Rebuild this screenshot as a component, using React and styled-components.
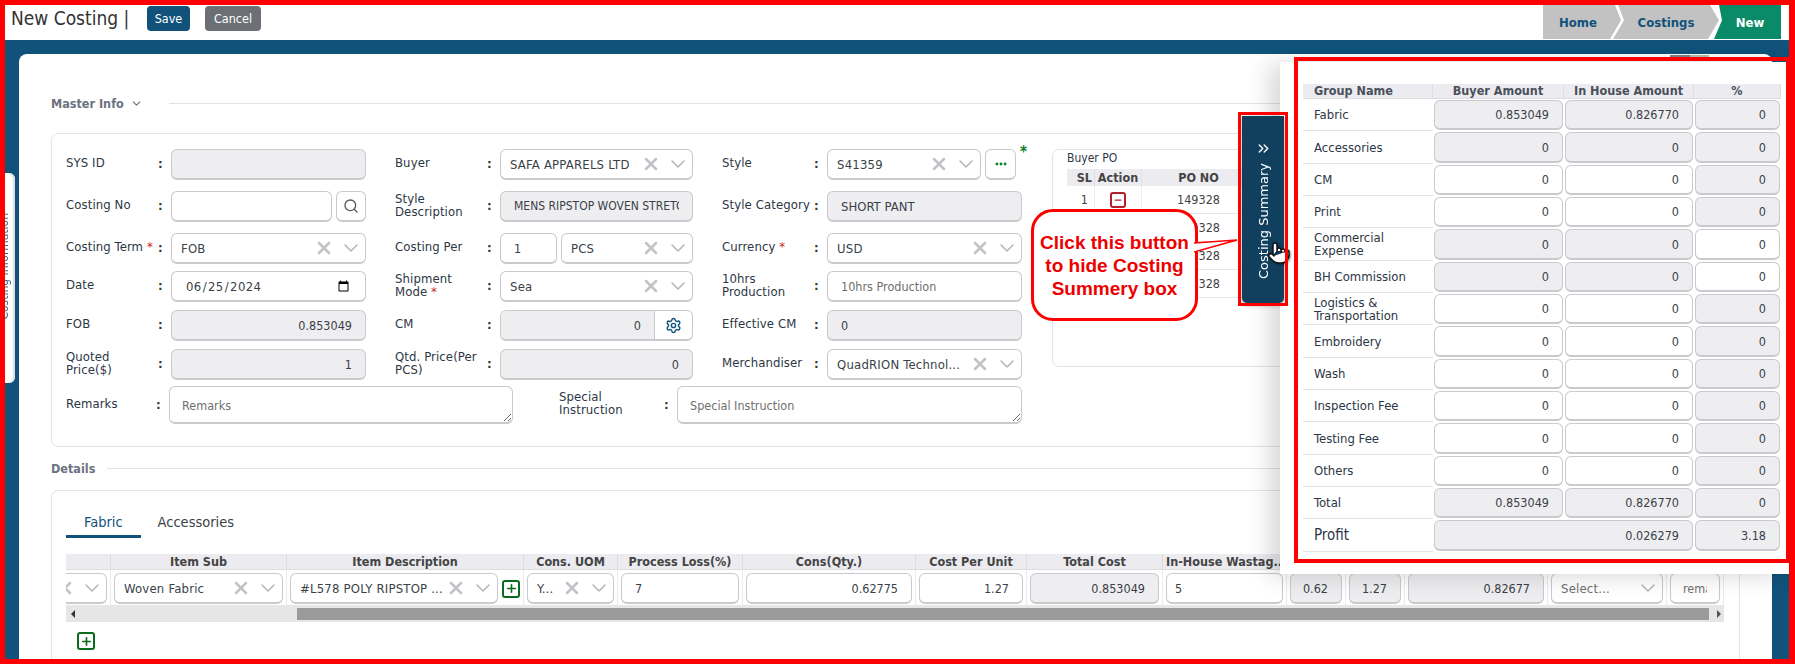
import React from "react";
import styled, { createGlobalStyle } from "styled-components";
import {
  X,
  ChevronDown,
  ChevronsRight,
  Search,
  Settings,
  Ellipsis,
  Plus,
  Minus,
  Pointer,
} from "lucide-react";

const navy = "#10527a";
const fieldBorder = "#c9c9ce";
const muted = "#eeeef0";

const GlobalStyle = createGlobalStyle`
  * { box-sizing: border-box; }
  html, body { margin: 0; padding: 0; background: ${navy}; }
  body {
    font-family: "DejaVu Sans Condensed", "DejaVu Sans", sans-serif;
    font-size: 12px;
    color: #333;
  }
`;

const Page = styled.div`
  position: relative;
  width: 1795px;
  height: 664px;
  overflow: hidden;
  background: ${navy};
`;

const TopBar = styled.header`
  display: flex;
  justify-content: space-between;
  height: 40px;
  padding: 5px 14px 1px 11px;
  background: #fff;
`;

const TitleRow = styled.div`
  display: flex;
  align-items: flex-start;
`;

const PageTitle = styled.h1`
  width: 136px;
  margin: 2px 0 0 0;
  font-size: 19px;
  font-weight: 400;
  line-height: 22px;
  color: #333;
`;

const HeadButton = styled.button`
  height: 25px;
  width: ${(p) => p.$width}px;
  margin: 1px ${(p) => p.$after}px 0 0;
  border: 0;
  border-radius: 4px;
  background: ${(p) => p.$bg};
  color: #fff;
  font: inherit;
  font-size: 12.5px;
  padding: 0;
`;

const Trail = styled.nav`
  display: flex;
`;

const Crumb = styled.a`
  display: flex;
  align-items: center;
  justify-content: center;
  width: ${(p) => p.$width}px;
  margin-left: ${(p) => (p.$first ? 0 : -8)}px;
  padding: ${(p) => (p.$first ? "0 8px 0 0" : p.$last ? "0 0 0 8px" : 0)};
  background: ${(p) => (p.$last ? "#0a8a68" : "#c2c2c2")};
  color: ${(p) => (p.$last ? "#fff" : navy)};
  font-size: 13px;
  font-weight: 700;
  clip-path: ${(p) =>
    p.$first
      ? "polygon(0 0, calc(100% - 6px) 0, 100% 45%, calc(100% - 11px) 100%, 0 100%)"
      : p.$last
        ? "polygon(8px 0, 100% 0, 100% 100%, 3px 100%, 11px 45%)"
        : "polygon(5px 0, calc(100% - 9px) 0, 100% 45%, calc(100% - 11px) 100%, 0 100%, 11px 45%)"};
`;

const Card = styled.main`
  height: 624px;
  margin: 14px 23px 0 19px;
  padding: 40px 32px 0;
  background: #fff;
  border-radius: 8px 8px 0 0;
`;

const SectionHead = styled.div`
  display: flex;
  align-items: center;
  gap: 6px;
  height: 18px;
  color: #6b7280;
  font-size: 12.5px;
  font-weight: 700;
  &::after {
    content: "";
    flex: 1;
    height: 1px;
    margin-left: ${(p) => p.$lineGap}px;
    background: #e2e2e6;
  }
`;

const Box = styled.section`
  border: 1px solid #e4e4e8;
  border-radius: 7px;
`;

const MasterBox = styled(Box)`
  display: flex;
  height: 314px;
  margin: 21px 0 12px;
  padding: 15px 0 0 14px;
`;

const FormGrid = styled.div`
  display: grid;
  grid-template-columns: 300px 298px 300px;
  grid-template-rows: 42px 42px 38px 39px 39px 38px 38px;
  column-gap: 29px;
  width: 956px;
  flex: none;
`;

const Field = styled.div`
  display: grid;
  grid-template-columns: ${(p) => p.$label || 92}px 13px 1fr;
  height: ${(p) => p.$height || 31}px;
  align-items: center;
`;

const Label = styled.label`
  font-size: 13px;
  letter-spacing: 0.1px;
  line-height: 13px;
  padding-bottom: 4px;
  color: #2d3644;
`;

const Req = styled.span`
  color: #c62828;
`;

const Colon = styled.span`
  font-weight: 700;
  font-size: 13px;
  color: #333;
  text-align: left;
  padding-bottom: 2px;
`;

const Controls = styled.div`
  display: flex;
  gap: 4px;
  min-width: 0;
  height: 100%;
`;

const Input = styled.input`
  flex: ${(p) => p.$flex || 1};
  width: 100%;
  min-width: 0;
  height: 100%;
  padding: 0 ${(p) => (p.$right ? 13 : p.$pad || 8)}px 0 ${(p) => p.$pad || 8}px;
  border: 1px solid ${fieldBorder};
  border-bottom-width: 2px;
  border-radius: 6px;
  outline: 0;
  background: ${(p) => (p.$grey ? muted : "#fff")};
  color: #3a3f48;
  font: inherit;
  font-size: ${(p) => p.$size || 12.5}px;
  letter-spacing: ${(p) => p.$track || 0}px;
  text-align: ${(p) => (p.$right ? "right" : "left")};
  &::placeholder {
    color: #6f6f6f;
  }
`;

const Area = styled.textarea`
  width: 100%;
  height: 38px;
  padding: 11px 12px 0;
  border: 1px solid ${fieldBorder};
  border-bottom-width: 2px;
  border-radius: 6px;
  outline: 0;
  font: inherit;
  font-size: 12.5px;
  &::placeholder {
    color: #6f6f6f;
  }
`;

const SelectBox = styled.div`
  display: flex;
  align-items: center;
  flex: ${(p) => p.$flex || 1};
  min-width: 0;
  height: 100%;
  padding: 0 2px 0 9px;
  border: 1px solid ${fieldBorder};
  border-bottom-width: 2px;
  border-radius: 6px;
  background: #fff;
  color: #3a3f48;
  font-size: 13px;
  letter-spacing: 0.2px;
`;

const SelectValue = styled.span`
  flex: 1;
  min-width: 0;
  overflow: hidden;
  white-space: nowrap;
  color: ${(p) => (p.$faint ? "#6f6f6f" : "inherit")};
`;

const Clear = styled(X)`
  flex: none;
  margin-right: 5px;
  color: #c2c2c7;
`;

const Caret = styled(ChevronDown)`
  flex: none;
  color: #b4b4b9;
`;

const SquareButton = styled.button`
  display: flex;
  align-items: center;
  justify-content: center;
  flex: none;
  width: ${(p) => p.$width}px;
  height: 100%;
  padding: 0;
  border: 1px solid ${fieldBorder};
  border-bottom-width: 2px;
  border-radius: 6px;
  background: #fff;
  color: ${(p) => p.$color || "#555"};
`;

const Joined = styled.div`
  display: flex;
  flex: 1;
  height: 100%;
  border: 1px solid ${fieldBorder};
  border-bottom-width: 2px;
  border-radius: 6px;
  overflow: hidden;
`;

const JoinedInput = styled(Input)`
  border: 0;
  border-radius: 0;
`;

const JoinedIcon = styled.span`
  display: flex;
  align-items: center;
  justify-content: center;
  flex: none;
  width: 38px;
  border-left: 1px solid ${fieldBorder};
  color: ${navy};
`;

const GreenStar = styled.span`
  width: 2px;
  margin-top: -4px;
  color: #0a7a2a;
  font-size: 15px;
  font-weight: 700;
  line-height: 14px;
`;

const NotesRow = styled.div`
  grid-column: 1 / -1;
  display: grid;
  grid-template-columns: 447px 463px;
  column-gap: 46px;
  margin-top: -1px;
`;

const BuyerPo = styled(Box)`
  flex: 1;
  height: 218px;
  margin: 0 19px 0 30px;
  padding: 0 0 0 14px;
`;

const PoTitle = styled.div`
  height: 19px;
  line-height: 16px;
  color: #2d3644;
`;

const PoTable = styled.div`
  display: grid;
  grid-template-columns: 28px 47px 114px;
  grid-template-rows: 17px repeat(4, 28px);
`;

const PoHead = styled.div`
  background: #ebebf0;
  border-right: 1px solid #e0e0e5;
  font-size: 12.5px;
  font-weight: 700;
  line-height: 17px;
  text-align: ${(p) => (p.$right ? "right" : "center")};
  padding-right: ${(p) => (p.$right ? 2 : 0)}px;
  color: #444;
`;

const PoCell = styled.div`
  display: flex;
  align-items: center;
  justify-content: ${(p) => (p.$right ? "flex-end" : "center")};
  padding-right: ${(p) => (p.$right ? 6 : 0)}px;
  border-bottom: 1px solid #e6e6ea;
  border-right: 1px solid #eeeef0;
  font-size: 12.5px;
  color: #444;
`;

const OutlineButton = styled.button`
  display: flex;
  align-items: center;
  justify-content: center;
  flex: none;
  width: ${(p) => p.$size || 18}px;
  height: ${(p) => p.$size || 18}px;
  padding: 0;
  border: 2px solid ${(p) => p.$color};
  border-radius: 3px;
  background: #fff;
  color: ${(p) => p.$color};
`;

const DetailsBox = styled(Box)`
  height: 200px;
  margin-top: 13px;
  padding: 17px 15px 0 14px;
  border-bottom: 0;
`;

const Tabs = styled.div`
  display: flex;
  height: 30px;
  margin-bottom: 16px;
`;

const Tab = styled.a`
  display: flex;
  align-items: center;
  padding: 0 ${(p) => (p.$active ? 18 : 17)}px;
  height: 30px;
  font-size: 14.5px;
  color: ${(p) => (p.$active ? navy : "#3a3f48")};
  border-bottom: 3px solid ${(p) => (p.$active ? navy : "transparent")};
`;

const DetailGrid = styled.div`
  display: grid;
  grid-template-columns: 45px 176px 237px 94px 125px 173px 111px 136px 124px 59px 59px 143px 119px 57px;
  grid-template-rows: 16px 35px;
  width: 1658px;
  overflow: hidden;
`;

const DetailHead = styled.div`
  overflow: hidden;
  padding: 0 3px;
  background: #ebebf0;
  border-right: 1px solid #dcdce1;
  border-bottom: 1px solid #dcdce1;
  font-weight: 700;
  font-size: 12.5px;
  line-height: 15px;
  text-align: center;
  white-space: nowrap;
  color: #444;
`;

const DetailCell = styled.div`
  display: flex;
  justify-content: ${(p) => (p.$end ? "flex-end" : "flex-start")};
  align-items: center;
  gap: 4px;
  min-width: 0;
  overflow: hidden;
  padding: 3px 3px 1px 3px;
  border-right: 1px solid #ececf0;
`;

const CutSelect = styled(SelectBox)`
  flex: none;
  width: 150px;
`;

const ScrollTrack = styled.div`
  display: flex;
  align-items: center;
  width: 1658px;
  height: 17px;
  background: #e6e6e6;
  padding: 0 2px 0 5px;
`;

const ScrollThumb = styled.div`
  height: 12px;
  margin-left: 222px;
  width: 1412px;
  background: #9b9b9b;
`;

const ArrowLeft = styled.span`
  width: 0;
  height: 0;
  border: 4px solid transparent;
  border-left: 0;
  border-right: 4px solid #333;
`;

const ArrowRight = styled.span`
  width: 0;
  height: 0;
  margin-left: 8px;
  border: 4px solid transparent;
  border-right: 0;
  border-left: 4px solid #555;
`;

const AddRow = styled.div`
  margin: 10px 0 0 11px;
`;

/* things that lie over the page */

const SideTab = styled.aside`
  position: absolute;
  left: 5px;
  top: 173px;
  width: 10px;
  height: 210px;
  overflow: hidden;
  background: #fff;
  border-radius: 0 6px 6px 0;
  box-shadow: inset -2px 0 2px #ddd;
`;

const SideTabText = styled.span`
  position: absolute;
  right: 4px;
  top: 40px;
  writing-mode: vertical-rl;
  transform: rotate(180deg);
  white-space: nowrap;
  color: #3f6a8a;
`;

const HiddenTabs = styled.div`
  position: absolute;
  left: 1670px;
  top: 55px;
  display: flex;
  height: 2px;
`;

const HiddenTab = styled.span`
  width: ${(p) => p.$width}px;
  background: ${(p) => p.$bg};
`;

const SummaryPanel = styled.aside`
  position: absolute;
  left: 1280px;
  top: 62px;
  width: 509px;
  height: 512px;
  padding: 22px 8px 0 23px;
  background: #fff;
  box-shadow: -10px 2px 22px rgba(0, 0, 0, 0.16);
`;

const SummaryToggle = styled.button`
  position: absolute;
  left: -38px;
  top: 54px;
  display: flex;
  flex-direction: column;
  align-items: center;
  gap: 6px;
  width: 42px;
  height: 187px;
  padding: 24px 0 0;
  border: 0;
  border-radius: 0 0 5px 5px;
  background: #11405f;
  color: #fff;
  box-shadow: 0 2px 5px rgba(0, 0, 0, 0.35);
`;

const ToggleText = styled.span`
  writing-mode: vertical-rl;
  transform: rotate(180deg);
  font-family: "DejaVu Sans", sans-serif;
  font-size: 13px;
  white-space: nowrap;
`;

const HandCursor = styled(Pointer)`
  position: absolute;
  left: 1267px;
  top: 241px;
  color: #111;
  fill: #fff;
  filter: drop-shadow(1px 1px 1px rgba(0, 0, 0, 0.4));
`;

const SummaryGrid = styled.div`
  display: grid;
  grid-template-columns: 130px 131px 130px 87px;
  grid-template-rows: 15px repeat(14, 32.35px);
`;

const SummaryHead = styled.div`
  background: #ebebf0;
  border-right: 1px solid #dcdce1;
  border-bottom: 1px solid #dcdce1;
  font-size: 12.5px;
  font-weight: 700;
  line-height: 14px;
  text-align: ${(p) => (p.$left ? "left" : "center")};
  padding-left: ${(p) => (p.$left ? 11 : 0)}px;
  color: #4a505a;
`;

const SummaryName = styled.div`
  display: flex;
  align-items: center;
  padding-left: 11px;
  border-bottom: 1px solid #e2e2e6;
  font-size: ${(p) => p.$size || 13}px;
  line-height: 13px;
  color: #2d3644;
`;

const SummaryCell = styled.div`
  grid-column: span ${(p) => p.$span || 1};
  padding: 1px;
`;

const Callout = styled.div`
  position: absolute;
  left: 1031px;
  top: 209px;
  display: flex;
  align-items: center;
  justify-content: center;
  width: 167px;
  height: 112px;
  border: 3px solid #f00;
  border-radius: 22px;
  background: #fff;
  color: #e00;
  font-family: "Liberation Sans", Arial, sans-serif;
  font-size: 19px;
  font-weight: 700;
  line-height: 23px;
  text-align: center;
`;

const CalloutTail = styled.svg`
  position: absolute;
  left: 160px;
  top: 26px;
`;

const RedBox = styled.div`
  position: absolute;
  left: ${(p) => p.$x}px;
  top: ${(p) => p.$y}px;
  width: ${(p) => p.$w}px;
  height: ${(p) => p.$h}px;
  border: ${(p) => p.$line}px solid #f00;
  pointer-events: none;
`;

const PageFrame = styled.div`
  position: absolute;
  inset: 0;
  border: 5px solid #f00;
  border-right-width: 6px;
  pointer-events: none;
`;

const Select = ({ value, faint, clear = true, flex }) => (
  <SelectBox $flex={flex}>
    <SelectValue $faint={faint}>{value}</SelectValue>
    {clear && <Clear size={20} strokeWidth={3} />}
    <Caret size={24} strokeWidth={1.5} />
  </SelectBox>
);

const FormField = ({ label, labelWidth, height, children }) => (
  <Field $label={labelWidth} $height={height}>
    <Label>{label}</Label>
    <Colon>:</Colon>
    <Controls>{children}</Controls>
  </Field>
);

const poRows = [1, 2, 3, 4];

// white = the amount can be typed, grey = it is worked out
const summaryRows = [
  ["Fabric", "0.853049", "0.826770", "0", "ggg"],
  ["Accessories", "0", "0", "0", "ggg"],
  ["CM", "0", "0", "0", "wwg"],
  ["Print", "0", "0", "0", "wwg"],
  [<>Commercial<br />Expense</>, "0", "0", "0", "ggw"],
  ["BH Commission", "0", "0", "0", "ggw"],
  [<>Logistics &<br />Transportation</>, "0", "0", "0", "wwg"],
  ["Embroidery", "0", "0", "0", "wwg"],
  ["Wash", "0", "0", "0", "wwg"],
  ["Inspection Fee", "0", "0", "0", "wwg"],
  ["Testing Fee", "0", "0", "0", "wwg"],
  ["Others", "0", "0", "0", "wwg"],
  ["Total", "0.853049", "0.826770", "0", "ggg"],
];

const detailHeads = [
  "",
  "Item Sub",
  "Item Description",
  "Cons. UOM",
  "Process Loss(%)",
  "Cons(Qty.)",
  "Cost Per Unit",
  "Total Cost",
  "In-House Wastag...",
  "",
  "",
  "",
  "",
  "",
];

const App = () => {
  return (
    <Page>
      <GlobalStyle />
      <TopBar>
        <TitleRow>
          <PageTitle>New Costing |</PageTitle>
          <HeadButton $bg={navy} $width={43} $after={15}>
            Save
          </HeadButton>
          <HeadButton $bg="#6c6f75" $width={56} $after={0}>
            Cancel
          </HeadButton>
        </TitleRow>
        <Trail>
          <Crumb $first $width={78}>
            Home
          </Crumb>
          <Crumb $width={106}>Costings</Crumb>
          <Crumb $last $width={70}>
            New
          </Crumb>
        </Trail>
      </TopBar>

      <Card>
        <SectionHead $lineGap={20}>
          Master Info
          <ChevronDown size={13} />
        </SectionHead>
        <MasterBox>
          <FormGrid>
            <FormField label="SYS ID" labelWidth={92}>
              <Input $grey readOnly />
            </FormField>
            <FormField label="Buyer">
              <Select value="SAFA APPARELS LTD" />
            </FormField>
            <FormField label="Style">
              <Select value="S41359" />
              <SquareButton $width={31} $color="#0a7a2a">
                <Ellipsis size={14} strokeWidth={3} />
              </SquareButton>
              <GreenStar>*</GreenStar>
            </FormField>

            <FormField label="Costing No">
              <Input readOnly />
              <SquareButton $width={30}>
                <Search size={16} />
              </SquareButton>
            </FormField>
            <FormField label="Style Description">
              <Input $grey $pad={13} $size={12} readOnly value="MENS RIPSTOP WOVEN STRETCH SHORT" />
            </FormField>
            <FormField label="Style Category">
              <Input $grey $pad={13} $size={13} readOnly value="SHORT PANT" />
            </FormField>

            <FormField
              label={
                <>
                  Costing Term <Req>*</Req>
                </>
              }
            >
              <Select value="FOB" />
            </FormField>
            <FormField label="Costing Per">
              <Input $flex="none" style={{ width: 57 }} $pad={13} readOnly value="1" />
              <Select value="PCS" />
            </FormField>
            <FormField
              label={
                <>
                  Currency <Req>*</Req>
                </>
              }
            >
              <Select value="USD" />
            </FormField>

            <FormField label="Date">
              <Input type="date" $pad={13} $size={13} $track={0.4} defaultValue="2024-06-25" />
            </FormField>
            <FormField
              label={
                <>
                  Shipment
                  <br />
                  Mode <Req>*</Req>
                </>
              }
            >
              <Select value="Sea" />
            </FormField>
            <FormField
              label={
                <>
                  10hrs
                  <br />
                  Production
                </>
              }
            >
              <Input $pad={13} placeholder="10hrs Production" readOnly />
            </FormField>

            <FormField label="FOB">
              <Input $grey $right readOnly value="0.853049" />
            </FormField>
            <FormField label="CM">
              <Joined>
                <JoinedInput $grey $right readOnly value="0" />
                <JoinedIcon>
                  <Settings size={17} />
                </JoinedIcon>
              </Joined>
            </FormField>
            <FormField label="Effective CM">
              <Input $grey $pad={13} readOnly value="0" />
            </FormField>

            <FormField
              label={
                <>
                  Quoted
                  <br />
                  Price($)
                </>
              }
            >
              <Input $grey $right readOnly value="1" />
            </FormField>
            <FormField label="Qtd. Price(Per PCS)">
              <Input $grey $right readOnly value="0" />
            </FormField>
            <FormField label="Merchandiser">
              <Select value="QuadRION Technol..." />
            </FormField>

            <NotesRow>
              <FormField label="Remarks" labelWidth={90} height={38}>
                <Area placeholder="Remarks" />
              </FormField>
              <FormField
                label={
                  <>
                    Special
                    <br />
                    Instruction
                  </>
                }
                labelWidth={105}
                height={38}
              >
                <Area placeholder="Special Instruction" />
              </FormField>
            </NotesRow>
          </FormGrid>

          <BuyerPo>
            <PoTitle>Buyer PO</PoTitle>
            <PoTable>
              <PoHead $right>SL</PoHead>
              <PoHead>Action</PoHead>
              <PoHead>PO NO</PoHead>
              {poRows.map((n) => (
                <React.Fragment key={n}>
                  <PoCell $right>{n}</PoCell>
                  <PoCell>
                    <OutlineButton $color="#b3202a" $size={16}>
                      <Minus size={10} strokeWidth={3} />
                    </OutlineButton>
                  </PoCell>
                  <PoCell>149328</PoCell>
                </React.Fragment>
              ))}
            </PoTable>
          </BuyerPo>
        </MasterBox>

        <SectionHead $lineGap={6}>Details</SectionHead>
        <DetailsBox>
          <Tabs>
            <Tab $active>Fabric</Tab>
            <Tab>Accessories</Tab>
          </Tabs>
          <DetailGrid>
            {detailHeads.map((head, i) => (
              <DetailHead key={i}>{head}</DetailHead>
            ))}
            <DetailCell $end>
              <CutSelect>
                <SelectValue />
                <Clear size={20} strokeWidth={3} />
                <Caret size={24} strokeWidth={1.5} />
              </CutSelect>
            </DetailCell>
            <DetailCell>
              <Select value="Woven Fabric" />
            </DetailCell>
            <DetailCell>
              <Select value="#L578 POLY RIPSTOP ..." />
              <OutlineButton $color="#0a6b1f">
                <Plus size={13} strokeWidth={3} />
              </OutlineButton>
            </DetailCell>
            <DetailCell>
              <Select value="Y..." />
            </DetailCell>
            <DetailCell>
              <Input $pad={13} readOnly value="7" />
            </DetailCell>
            <DetailCell>
              <Input $right readOnly value="0.62775" />
            </DetailCell>
            <DetailCell>
              <Input $right readOnly value="1.27" />
            </DetailCell>
            <DetailCell>
              <Input $grey $right readOnly value="0.853049" />
            </DetailCell>
            <DetailCell>
              <Input readOnly value="5" />
            </DetailCell>
            <DetailCell>
              <Input $grey $right readOnly value="0.62" />
            </DetailCell>
            <DetailCell>
              <Input $grey $right readOnly value="1.27" />
            </DetailCell>
            <DetailCell>
              <Input $grey $right readOnly value="0.82677" />
            </DetailCell>
            <DetailCell>
              <Select value="Select..." faint clear={false} />
            </DetailCell>
            <DetailCell>
              <Input $pad={12} placeholder="remarks" readOnly />
            </DetailCell>
          </DetailGrid>
          <ScrollTrack>
            <ArrowLeft />
            <ScrollThumb />
            <ArrowRight />
          </ScrollTrack>
          <AddRow>
            <OutlineButton $color="#0a6b1f">
              <Plus size={13} strokeWidth={3} />
            </OutlineButton>
          </AddRow>
        </DetailsBox>
      </Card>

      <SideTab>
        <SideTabText>Costing Information</SideTabText>
      </SideTab>

      <HiddenTabs>
        <HiddenTab $width={20} $bg="#7d7f86" />
        <HiddenTab $width={19} $bg="#a9c7a4" />
      </HiddenTabs>

      <SummaryPanel>
        <SummaryToggle>
          <ChevronsRight size={17} />
          <ToggleText>Costing Summary</ToggleText>
        </SummaryToggle>
        <SummaryGrid>
          <SummaryHead $left>Group Name</SummaryHead>
          <SummaryHead>Buyer Amount</SummaryHead>
          <SummaryHead>In House Amount</SummaryHead>
          <SummaryHead>%</SummaryHead>
          {summaryRows.map(([name, buyer, house, pct, kinds], r) => (
            <React.Fragment key={r}>
              <SummaryName>{name}</SummaryName>
              {[buyer, house, pct].map((v, i) => (
                <SummaryCell key={i}>
                  <Input $right $grey={kinds[i] === "g"} readOnly value={v} />
                </SummaryCell>
              ))}
            </React.Fragment>
          ))}
          <SummaryName $size={15}>Profit</SummaryName>
          <SummaryCell $span={2}>
            <Input $right $grey readOnly value="0.026279" />
          </SummaryCell>
          <SummaryCell>
            <Input $right $grey readOnly value="3.18" />
          </SummaryCell>
        </SummaryGrid>
      </SummaryPanel>

      <HandCursor size={24} strokeWidth={1.5} />

      <Callout>
        Click this button
        <br />
        to hide Costing
        <br />
        Summery box
        <CalloutTail width="44" height="18" viewBox="0 0 44 18">
          <path d="M0 5 L43 2 L0 14" fill="#fff" stroke="#f00" strokeWidth="1.6" />
        </CalloutTail>
      </Callout>

      <RedBox $x={1238} $y={112} $w={50} $h={194} $line={3} />
      <RedBox $x={1294} $y={57} $w={496} $h={506} $line={4} />
      <PageFrame />
    </Page>
  );
};

export default App;
